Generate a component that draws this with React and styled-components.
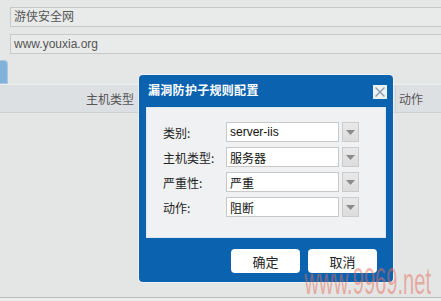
import styled, { createGlobalStyle } from "styled-components";

const GlobalStyle = createGlobalStyle`
  html, body {
    margin: 0;
    padding: 0;
  }
  body {
    font-family: "Liberation Sans", "Noto Sans CJK SC", sans-serif;
    font-size: 12px;
    color: #333;
  }
`;

const fields = [
  { label: "类别:", value: "server-iis" },
  { label: "主机类型:", value: "服务器" },
  { label: "严重性:", value: "严重" },
  { label: "动作:", value: "阻断" },
];

export default function App() {
  return (
    <>
      <GlobalStyle />
      <Page>
        <Form>
          <TextBox>游侠安全网</TextBox>
          <TextBox>www.youxia.org</TextBox>
        </Form>
        <Tab />
        <HeaderRow>
          <HeadCell $w={80} />
          <HeadCell $w={58}>主机类型</HeadCell>
          <HeadSpacer />
          <HeadCell $w={46} $border>动作</HeadCell>
        </HeaderRow>
        <Body />
        <Footer />

        <Dialog>
          <TitleBar>
            <Title>漏洞防护子规则配置</Title>
            <CloseButton>
              <svg width="12" height="12" viewBox="0 0 12 12">
                <path d="M1.5 1.5 L10.5 10.5 M10.5 1.5 L1.5 10.5" stroke="#8a9aa8" strokeWidth="1.4" />
              </svg>
            </CloseButton>
          </TitleBar>
          <Panel>
            {fields.map((f) => (
              <Row key={f.label}>
                <Label>{f.label}</Label>
                <Select>{f.value}</Select>
                <DropButton>
                  <svg width="9" height="5" viewBox="0 0 9 5">
                    <path d="M0 0 H9 L4.5 5 Z" fill="#8b8b8b" />
                  </svg>
                </DropButton>
              </Row>
            ))}
          </Panel>
          <Buttons>
            <Button>确定</Button>
            <Button>取消</Button>
          </Buttons>
        </Dialog>

        <Watermark>www.9969.net</Watermark>
      </Page>
    </>
  );
}

const Page = styled.div`
  position: relative;
  width: 441px;
  height: 301px;
  overflow: hidden;
  background: #e5e6e6;
  display: flex;
  flex-direction: column;
`;

const Form = styled.div`
  display: flex;
  flex-direction: column;
  gap: 7px;
  padding: 7px 0 0 10px;
`;

const TextBox = styled.div`
  height: 18px;
  width: 460px;
  box-sizing: content-box;
  border: 1px solid #c6c8c9;
  background: #e9eaea;
  padding-left: 3px;
  line-height: 18px;
  font-size: 12px;
  color: #555;
`;

const Tab = styled.div`
  margin-top: 6px;
  width: 8px;
  height: 24px;
  background: #82b2d9;
  border: 1px solid #a9c8e2;
  border-left: none;
  border-radius: 0 4px 0 0;
  box-sizing: border-box;
`;

const HeaderRow = styled.div`
  display: flex;
  height: 27px;
  background: #dde0e3;
  border-top: 1px solid #eceeef;
  border-bottom: 1px solid #cdd1d4;
`;

const HeadCell = styled.div`
  width: ${({ $w }) => $w}px;
  flex: none;
  display: flex;
  align-items: center;
  padding-left: ${({ $border }) => ($border ? "3px" : "5px")};
  box-sizing: border-box;
  border-left: 1px solid ${({ $border }) => ($border ? "#cfd3d6" : "transparent")};
  font-family: "Noto Sans CJK SC", sans-serif;
  font-size: 12px;
  color: #555;
`;

const HeadSpacer = styled.div`
  flex: 1;
`;

const Body = styled.div`
  flex: 1;
  background: #e4e5e5;
`;

const Footer = styled.div`
  height: 3px;
  border-top: 1px solid #b9bdbf;
  background: #eceded;
`;

const Dialog = styled.div`
  position: absolute;
  left: 139px;
  top: 75px;
  width: 254px;
  height: 207px;
  box-sizing: border-box;
  background: #0b62af;
  border-radius: 4px;
  box-shadow: 0 0 0 1px rgba(255, 255, 255, 0.45);
  display: flex;
  flex-direction: column;
`;

const TitleBar = styled.div`
  height: 32px;
  display: flex;
  align-items: center;
  justify-content: space-between;
  padding: 0 6px 0 9px;
`;

const Title = styled.div`
  font-family: "Noto Sans CJK SC", serif;
  font-weight: 700;
  font-size: 12px;
  letter-spacing: 0.3px;
  color: #fff;
  margin-top: -3px;
`;

const CloseButton = styled.div`
  width: 14px;
  height: 14px;
  background: #eef2f6;
  display: flex;
  align-items: center;
  justify-content: center;
  margin-top: 2px;
`;

const Panel = styled.div`
  margin: 0 7px;
  height: 131px;
  box-sizing: border-box;
  background: #f0f1f2;
  border: 1px solid #dfe8f0;
  padding: 14px 0 0 16px;
  display: flex;
  flex-direction: column;
  gap: 5px;
`;

const Row = styled.div`
  display: flex;
  align-items: center;
  height: 20px;
`;

const Label = styled.div`
  width: 63px;
  font-family: "Noto Sans CJK SC", sans-serif;
  font-size: 12px;
  color: #222;
`;

const Select = styled.div`
  width: 113px;
  height: 20px;
  box-sizing: border-box;
  background: #fff;
  border: 1px solid #c8c8c8;
  padding-left: 3px;
  display: flex;
  align-items: center;
  font-family: "Liberation Sans", "Noto Sans CJK SC", sans-serif;
  font-size: 12px;
  color: #111;
`;

const DropButton = styled.div`
  width: 17px;
  height: 20px;
  margin-left: 3px;
  box-sizing: border-box;
  background: linear-gradient(#e9e9e9, #dcdcdc);
  border: 1px solid #cbcbcb;
  display: flex;
  align-items: center;
  justify-content: center;
`;

const Buttons = styled.div`
  display: flex;
  justify-content: flex-end;
  gap: 8px;
  padding: 11px 16px 0 0;
`;

const Button = styled.div`
  width: 69px;
  height: 24px;
  border-radius: 4px;
  background: #fff;
  display: flex;
  align-items: center;
  justify-content: center;
  font-family: "Noto Sans CJK SC", sans-serif;
  font-size: 13px;
  color: #222;
`;

const Watermark = styled.div`
  position: absolute;
  right: 10px;
  bottom: 1px;
  font-family: "Liberation Sans", sans-serif;
  font-size: 36px;
  line-height: 1;
  color: rgba(228, 112, 92, 0.5);
  transform: scaleX(0.56);
  transform-origin: right bottom;
  pointer-events: none;
  white-space: nowrap;
`;
